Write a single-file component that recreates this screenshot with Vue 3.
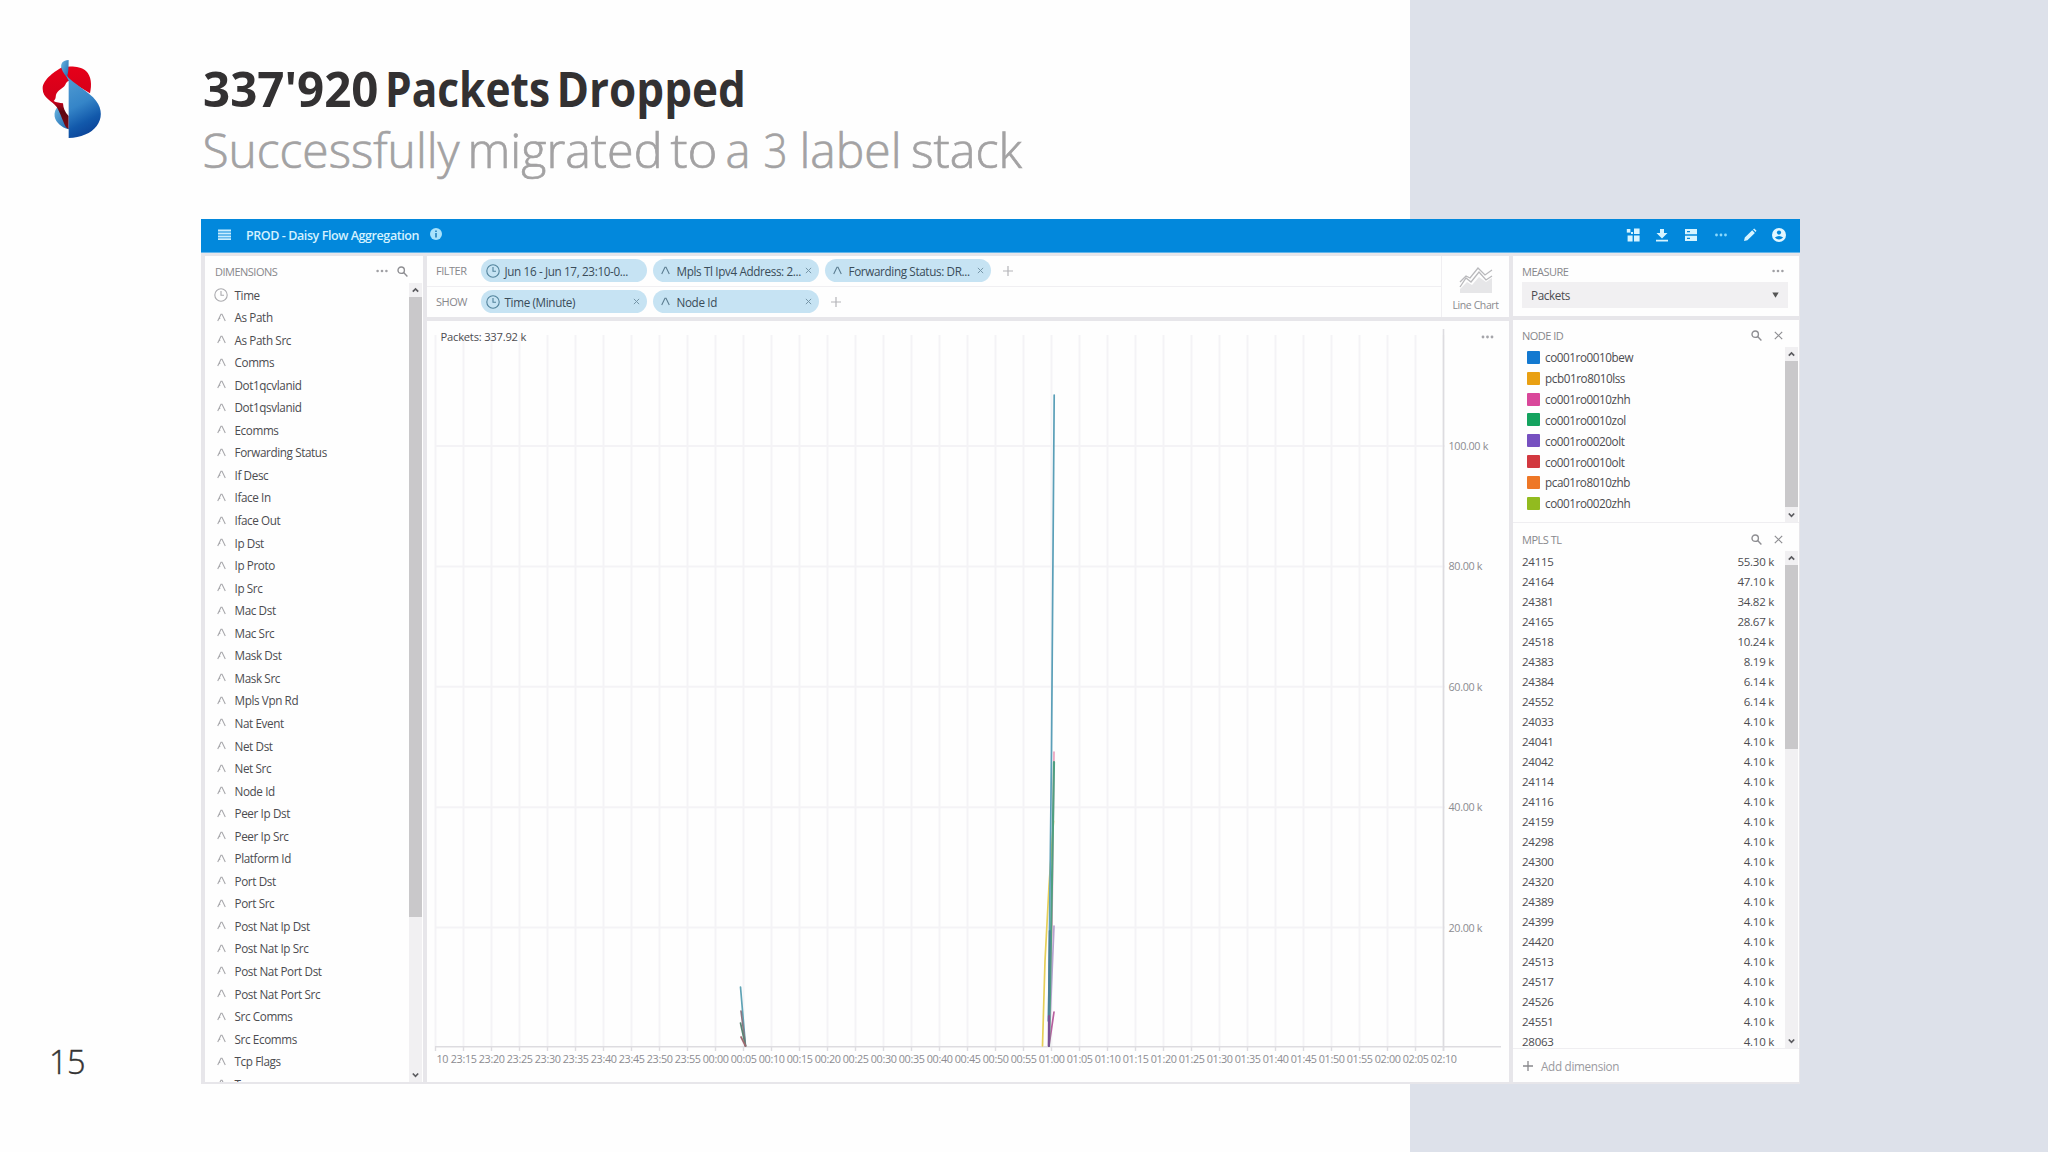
<script setup>
const titleWords = [
  { text: "337'920", x: 0, w: 175.5 },
  { text: 'Packets', x: 182, w: 165 },
  { text: 'Dropped', x: 353.5, w: 189.5 }
]
const subtitleWords = [
  { text: 'Successfully', x: -0.5, w: 257 },
  { text: 'migrated', x: 264.5, w: 195 },
  { text: 'to', x: 467.5, w: 47 },
  { text: 'a', x: 522.5, w: 25 },
  { text: '3', x: 560.5, w: 24 },
  { text: 'label', x: 596.5, w: 102 },
  { text: 'stack', x: 708, w: 111 }
]

const dimensions = [
  'Time', 'As Path', 'As Path Src', 'Comms', 'Dot1qcvlanid', 'Dot1qsvlanid', 'Ecomms',
  'Forwarding Status', 'If Desc', 'Iface In', 'Iface Out', 'Ip Dst', 'Ip Proto', 'Ip Src',
  'Mac Dst', 'Mac Src', 'Mask Dst', 'Mask Src', 'Mpls Vpn Rd', 'Nat Event', 'Net Dst',
  'Net Src', 'Node Id', 'Peer Ip Dst', 'Peer Ip Src', 'Platform Id', 'Port Dst', 'Port Src',
  'Post Nat Ip Dst', 'Post Nat Ip Src', 'Post Nat Port Dst', 'Post Nat Port Src',
  'Src Comms', 'Src Ecomms', 'Tcp Flags', 'Tos'
]

const filters = [
  { icon: 'time', label: 'Jun 16 - Jun 17, 23:10-0...', closable: false },
  { icon: 'text', label: 'Mpls Tl Ipv4 Address: 2...', closable: true },
  { icon: 'text', label: 'Forwarding Status: DR...', closable: true }
]
const splits = [
  { icon: 'time', label: 'Time (Minute)', closable: true },
  { icon: 'text', label: 'Node Id', closable: true }
]
const shelves = [
  { name: 'FILTER', items: filters },
  { name: 'SHOW', items: splits }
]

const nodes = [
  ['co001ro0010bew', '#1379d0'],
  ['pcb01ro8010lss', '#e9a013'],
  ['co001ro0010zhh', '#d9479a'],
  ['co001ro0010zol', '#14a35f'],
  ['co001ro0020olt', '#7650c0'],
  ['co001ro0010olt', '#d2383f'],
  ['pca01ro8010zhb', '#ee7726'],
  ['co001ro0020zhh', '#92bb1f']
]

const labels = [
  ['24115', '55.30 k'], ['24164', '47.10 k'], ['24381', '34.82 k'], ['24165', '28.67 k'],
  ['24518', '10.24 k'], ['24383', '8.19 k'], ['24384', '6.14 k'], ['24552', '6.14 k'],
  ...['24033', '24041', '24042', '24114', '24116', '24159', '24298', '24300', '24320',
    '24389', '24399', '24420', '24513', '24517', '24526', '24551', '28063'].map(n => [n, '4.10 k'])
]

const pad = n => String(n).padStart(2, '0')
const ticks = Array.from({ length: 37 }, (_, i) => {
  const minutes = (23 * 60 + 10 + i * 5) % 1440
  return { x: 8.5 + i * 28, label: i ? `${pad(Math.floor(minutes / 60))}:${pad(minutes % 60)}` : '10' }
})
const levels = [100, 80, 60, 40, 20].map((v, i) => ({ y: 125 + i * 120.4, label: `${v}.00 k` }))
</script>

<template>
  <main class="slide">
    <header class="heading">
      <svg class="logo" viewBox="0 0 270 300">
        <defs>
          <linearGradient id="sail" x1="0.3" y1="0" x2="0.6" y2="1">
            <stop offset="0" stop-color="#4f9ad2" />
            <stop offset="0.45" stop-color="#3585c8" />
            <stop offset="0.75" stop-color="#1259ab" />
            <stop offset="1" stop-color="#0a4196" />
          </linearGradient>
          <linearGradient id="tip" x1="0" y1="0" x2="1" y2="1">
            <stop offset="0" stop-color="#69b5e0" />
            <stop offset="1" stop-color="#1c66ae" />
          </linearGradient>
          <linearGradient id="ribbon" x1="0" y1="0" x2="0" y2="1">
            <stop offset="0" stop-color="#e60019" />
            <stop offset="0.55" stop-color="#d2001a" />
            <stop offset="0.72" stop-color="#5c0710" />
            <stop offset="1" stop-color="#7d0a14" />
          </linearGradient>
        </defs>
        <path fill="url(#tip)" d="M86 168C76 176 72 188 74 200C78 218 94 232 116 238L108 206L92 172Z" />
        <path fill="url(#ribbon)" d="M96 52C78 62 38 88 38 116C38 144 66 152 80 171C90 186 98 214 108 232L116 238V198C104 186 100 174 99 160C90 158 78 158 71 153C80 146 75 138 80 130C88 116 102 116 108 100C110 96 113 94 116 93L130 100L180 130C186 104 184 78 168 63C150 48 120 48 96 52Z" />
        <path fill="url(#tip)" d="M116 30C98 31 92 40 94 54C98 68 108 78 116 90L112 76Q116 66 116 30Z" />
        <path fill="url(#sail)" d="M108 76C132 102 178 126 198 152C218 178 216 206 200 228C184 250 152 263 116 264V92Z" />
      </svg>
      <svg class="titles" viewBox="0 0 900 140">
        <text v-for="w in titleWords" :key="w.text" class="title" :x="w.x" y="57" :textLength="w.w" lengthAdjust="spacingAndGlyphs">{{ w.text }}</text>
        <text v-for="w in subtitleWords" :key="w.text" class="subtitle" :x="w.x" y="118" :textLength="w.w" lengthAdjust="spacingAndGlyphs">{{ w.text }}</text>
      </svg>
    </header>

    <section class="app">
      <nav class="topbar">
        <svg class="burger" viewBox="0 0 13 11"><path d="M0 1.5h13M0 4.5h13M0 7.5h13M0 10.2h13" stroke="#c9edff" stroke-width="1.9" /></svg>
        <span class="cube">PROD - Daisy Flow Aggregation</span>
        <svg class="info" viewBox="0 0 12 12"><circle cx="6" cy="6" r="6" fill="#a9e2fb" /><path d="M6 2.5v1.6M6 5v4.4" stroke="#2a86c0" stroke-width="1.7" /></svg>
        <div class="tools">
          <svg viewBox="0 0 14 14" fill="#d6f4ff"><rect x=".8" y="1" width="3.6" height="3.6" /><path d="M8 .5h5.6v5.6H8zM1.6 7.6h5v5.8h-5zM8 7.6h5.6v5.8H8zM5 4h2v2H5z" /></svg>
          <svg viewBox="0 0 14 14" fill="#d6f4ff"><path d="M5 1h4v4h3.5L7 10.4 1.5 5H5zM1 11.8h12v1.8H1z" /></svg>
          <svg viewBox="0 0 14 14" fill="#d6f4ff"><path d="M1 1h12v5.2H1zM1 7.8h12V13H1z" /><path d="M3 3.6h3M3 10.4h3" stroke="#0288dc" stroke-width="1.2" /></svg>
          <svg viewBox="0 0 14 14" fill="#8bd8fb"><circle cx="2.5" cy="7" r="1.4" /><circle cx="7" cy="7" r="1.4" /><circle cx="11.5" cy="7" r="1.4" /></svg>
          <svg viewBox="0 0 14 14" fill="#d6f4ff"><path d="M1 13l.8-3.4 7.4-7.4 2.7 2.7-7.5 7.4zM10 1.4 11.2.5 13.5 2.8 12.6 4z" /></svg>
          <svg viewBox="0 0 14 14"><circle cx="7" cy="7" r="7" fill="#e2f7ff" /><circle cx="7" cy="4.6" r="2.1" fill="#0288dc" /><path d="M2.8 9.6Q7 6.6 11.2 9.6 7 13.4 2.8 9.6" fill="#0288dc" /></svg>
        </div>
      </nav>

      <div class="body">
        <aside class="panel dims">
          <div class="panel-head">
            <span class="caption">DIMENSIONS</span>
            <svg class="dots" viewBox="0 0 12 4"><circle cx="1.6" cy="2" r="1.3" /><circle cx="6" cy="2" r="1.3" /><circle cx="10.4" cy="2" r="1.3" /></svg>
            <svg class="search" viewBox="0 0 11 11"><circle cx="4.2" cy="4.2" r="3.2" /><path d="M6.6 6.6 10.4 10.4" /></svg>
          </div>
          <div class="dims-body">
            <ul class="dim-list">
              <li v-for="(d, i) in dimensions" :key="d">
                <svg v-if="i === 0" class="clock" viewBox="0 0 14 14"><circle cx="7" cy="7" r="6.2" /><path d="M7 3V7.2H10" /></svg>
                <svg v-else class="glyph" viewBox="0 0 10 9"><path d="M.8 8.4 4.4.8H5.6L9.2 8.4M2.4 6 3.6 5" /></svg>
                <span>{{ d }}</span>
              </li>
            </ul>
            <div class="scrollbar">
              <svg viewBox="0 0 13 13"><path d="M3.8 8.2 6.5 5.4 9.2 8.2" /></svg>
              <div class="thumb dims-thumb"></div>
              <svg class="down" viewBox="0 0 13 13"><path d="M3.8 5 6.5 7.8 9.2 5" /></svg>
            </div>
          </div>
        </aside>

        <div class="center">
          <div class="panel controls">
            <div class="shelves">
              <div v-for="s in shelves" :key="s.name" class="shelf">
                <span class="caption shelf-name">{{ s.name }}</span>
                <div v-for="p in s.items" :key="p.label" class="pill">
                  <svg v-if="p.icon === 'time'" class="clock" viewBox="0 0 14 14"><circle cx="7" cy="7" r="6.2" /><path d="M7 3V7.2H10" /></svg>
                  <svg v-else class="glyph" viewBox="0 0 10 9"><path d="M.8 8.4 4.4.8H5.6L9.2 8.4" /></svg>
                  <span class="pill-label">{{ p.label }}</span>
                  <svg v-if="p.closable" class="close" viewBox="0 0 8 8"><path d="M1 1 7 7M7 1 1 7" /></svg>
                </div>
                <svg class="plus" viewBox="0 0 10 10"><path d="M5 0V10M0 5H10" /></svg>
              </div>
            </div>
            <div class="vis">
              <svg viewBox="0 0 34 26">
                <path d="M1 22 8 15 13 18 20 10 27 15 33 11V26H1Z" fill="#e6e6e8" />
                <path d="M1 20 7 11 12 15 20 5 27 13 33 9" fill="none" stroke="#b9b9bc" stroke-width="1.3" />
                <path d="M1 15 7 9 11 11 19 1 26 8 33 3" fill="none" stroke="#b9b9bc" stroke-width="1.3" />
              </svg>
              <span>Line Chart</span>
            </div>
          </div>

          <div class="panel chart">
            <svg viewBox="0 0 1081 760">
              <g stroke="#f4f3f6" stroke-width="2">
                <line v-for="t in ticks" :key="t.x" :x1="t.x" :x2="t.x" y1="14" y2="725" />
                <line v-for="l in levels" :key="l.label" x1="9" x2="1018" :y1="l.y" :y2="l.y" />
              </g>
              <g stroke="#dddce0" stroke-width="1.4">
                <line v-for="t in ticks" :key="t.label" :x1="t.x" :x2="t.x" y1="725" y2="730" />
              </g>
              <path d="M1016.5 8V730M8 725.7H1074" stroke="#dddce0" stroke-width="1.6" fill="none" />
              <text class="total" x="13.5" y="20">Packets: 337.92 k</text>
              <g fill="#a5a5aa"><circle cx="1056" cy="16" r="1.4" /><circle cx="1060.5" cy="16" r="1.4" /><circle cx="1065" cy="16" r="1.4" /></g>
              <text v-for="l in levels" :key="l.y" class="axis" x="1021.5" :y="l.y + 4">{{ l.label }}</text>
              <text v-for="(t, i) in ticks" :key="t.label" class="axis" :text-anchor="i ? 'middle' : 'start'" :x="i ? t.x + 0.2 : t.x + 1" y="741.5">{{ t.label }}</text>
              <g fill="none" stroke-width="1.7" stroke-linecap="round">
                <path stroke="#d9487f" stroke-opacity=".5" d="M627 431 625 600 622 725" />
                <path stroke="#e6cf58" d="M626.5 500 622 565 618 640 615.5 725" />
                <path stroke="#b6a3cf" d="M627 605 622 725" />
                <path stroke="#b75f9e" d="M627 691 622 725" />
                <path stroke="#4f9f80" stroke-width="2.2" d="M627 441 625 560 622 725" />
                <path stroke="#5a9fb8" d="M627.2 74 625.5 300 624.5 430 621.5 700" />
                <path stroke="#4a7f93" stroke-width="2" d="M622.7 610 621.7 700" />
                <path stroke="#7a4f93" stroke-width="2.2" d="M622 695 621.8 725" />
                <path stroke="#5fa3b5" d="M313.5 666 318.5 725" />
                <path stroke="#8a7682" d="M314 690 318.5 725" />
                <path stroke="#5a8474" d="M313.5 702 318.5 725" />
                <path stroke="#a06a70" d="M314 716 318.5 725" />
              </g>
            </svg>
          </div>
        </div>

        <div class="side">
          <div class="panel measure">
            <div class="panel-head">
              <span class="caption">MEASURE</span>
              <svg class="dots" viewBox="0 0 12 4"><circle cx="1.6" cy="2" r="1.3" /><circle cx="6" cy="2" r="1.3" /><circle cx="10.4" cy="2" r="1.3" /></svg>
            </div>
            <div class="select"><span>Packets</span><svg viewBox="0 0 7 6"><path d="M.3.5H6.7L3.5 5.7Z" fill="#555" /></svg></div>
          </div>

          <div class="panel tiles">
            <section class="tile nodes">
              <div class="panel-head">
                <span class="caption">NODE ID</span>
                <svg class="search" viewBox="0 0 11 11"><circle cx="4.2" cy="4.2" r="3.2" /><path d="M6.6 6.6 10.4 10.4" /></svg>
                <svg class="cross" viewBox="0 0 9 9"><path d="M.8.8 8.2 8.2M8.2.8.8 8.2" /></svg>
              </div>
              <div class="tile-body">
                <ul class="node-list">
                  <li v-for="n in nodes" :key="n[0]"><i :style="{ background: n[1] }"></i><span>{{ n[0] }}</span></li>
                </ul>
                <div class="scrollbar">
                  <svg viewBox="0 0 13 13"><path d="M3.8 8.2 6.5 5.4 9.2 8.2" /></svg>
                  <div class="thumb nodes-thumb"></div>
                  <svg class="down" viewBox="0 0 13 13"><path d="M3.8 5 6.5 7.8 9.2 5" /></svg>
                </div>
              </div>
            </section>
            <section class="tile mpls">
              <div class="panel-head">
                <span class="caption">MPLS TL</span>
                <svg class="search" viewBox="0 0 11 11"><circle cx="4.2" cy="4.2" r="3.2" /><path d="M6.6 6.6 10.4 10.4" /></svg>
                <svg class="cross" viewBox="0 0 9 9"><path d="M.8.8 8.2 8.2M8.2.8.8 8.2" /></svg>
              </div>
              <div class="tile-body">
                <ul class="label-list">
                  <li v-for="l in labels" :key="l[0]"><span>{{ l[0] }}</span><span>{{ l[1] }}</span></li>
                </ul>
                <div class="scrollbar">
                  <svg viewBox="0 0 13 13"><path d="M3.8 8.2 6.5 5.4 9.2 8.2" /></svg>
                  <div class="thumb mpls-thumb"></div>
                  <svg class="down" viewBox="0 0 13 13"><path d="M3.8 5 6.5 7.8 9.2 5" /></svg>
                </div>
              </div>
            </section>
            <footer class="add">
              <svg viewBox="0 0 10 10"><path d="M5 0V10M0 5H10" /></svg>
              <span>Add dimension</span>
            </footer>
          </div>
        </div>
      </div>
    </section>

    <div class="page-number">15</div>
  </main>
</template>

<style>
body { margin: 0; }
</style>

<style scoped>
* { box-sizing: border-box; }
ul { list-style: none; margin: 0; padding: 0; }
svg { display: block; flex: none; }
.slide {
  position: relative;
  width: 2048px;
  height: 1152px;
  overflow: hidden;
  background: linear-gradient(90deg, #fefefe 1410px, #dde1ea 1410px);
  font-family: "Open Sans", "Noto Sans", sans-serif;
  color: #4c4c50;
}
.heading { display: flex; height: 219px; padding: 50px 0 0 30px; }
.logo { width: 90px; height: 100px; }
.titles { width: 900px; height: 140px; margin-left: 83px; overflow: visible; }
.title { font-size: 49px; font-weight: 700; fill: #333132; }
.subtitle { font-size: 48px; font-weight: 300; fill: #a3a2a3; stroke: #a3a2a3; stroke-width: 0.7px; }

.app {
  display: flex;
  flex-direction: column;
  width: 1599px;
  height: 865px;
  margin-left: 201px;
  background: #e7e6ea;
}
.topbar {
  display: flex;
  align-items: center;
  height: 34px;
  padding: 0 14px 0 17px;
  background: #0288dc;
  border-bottom: 1px solid #62b5ea;
}
.burger { width: 13px; height: 11px; margin-top: -3px; }
.cube { margin-left: 15px; font-size: 12.5px; font-weight: 600; letter-spacing: -0.42px; color: #d3f1ff; white-space: nowrap; width: 173px; }
.info { width: 12px; height: 12px; margin: -3px 0 0 11px; }
.tools { display: flex; gap: 15.2px; margin: -2px 0 0 auto; }
.tools svg { width: 14px; height: 14px; }

.body { display: flex; flex: 1; gap: 4px; padding: 3px 1px 2px 4px; min-height: 0; }
.panel { background: #fefefe; }
.panel-head { display: flex; align-items: center; }
.caption { font-size: 11px; letter-spacing: -0.5px; color: #88888c; }
.dots { width: 12px; height: 4px; fill: #a0a0a4; }
.search { width: 11px; height: 11px; fill: none; stroke: #8e8e92; stroke-width: 1.4; }
.cross { width: 9px; height: 9px; stroke: #8e8e92; stroke-width: 1.2; }
.clock { width: 14px; height: 14px; fill: none; stroke: #aaaaae; stroke-width: 1.1; }
.glyph { width: 9px; height: 9px; fill: none; stroke: #a8a8ac; stroke-width: 1.2; }

.scrollbar { display: flex; flex-direction: column; width: 13px; background: #f1f0f2; }
.scrollbar svg { width: 13px; height: 14px; fill: none; stroke: #5c5c60; stroke-width: 1.7; }
.scrollbar .down { margin-top: auto; }
.thumb { width: 13px; background: #c9c8ca; }
.dims-thumb { height: 620px; }
.nodes-thumb { height: 146px; }
.mpls-thumb { height: 184px; }

.dims { display: flex; flex-direction: column; width: 218px; }
.dims .panel-head { height: 27px; padding: 3px 15px 0 10px; }
.dims .dots { margin-left: auto; }
.dims .search { margin-left: 9px; }
.dims-body { display: flex; flex: 1; min-height: 0; overflow: hidden; padding-right: 1px; }
.dim-list { flex: 1; padding: 0.3px 0 0 9px; }
.dim-list li { display: flex; align-items: center; height: 22.55px; font-size: 11.7px; letter-spacing: -0.38px; white-space: nowrap; }
.dim-list span { margin-left: 6.5px; }
.dim-list .glyph { margin: 0 2px 0 3px; }

.center { display: flex; flex-direction: column; gap: 4px; width: 1082px; }
.controls { display: flex; height: 61px; }
.shelves { flex: 1; }
.shelf { display: flex; align-items: center; height: 30.5px; padding-left: 9px; border-bottom: 1px solid #f0eff2; }
.shelf:last-child { border: 0; }
.shelf-name { width: 45px; }
.pill {
  display: flex;
  align-items: center;
  width: 166px;
  height: 23px;
  margin-right: 6px;
  padding: 0 7px 0 5px;
  border-radius: 12px;
  background: #c6e3f3;
}
.pill .clock { stroke: #51829b; margin-right: 4.5px; }
.pill .glyph { margin: 0 6.5px 0 3px; stroke: #5b7c90; }
.pill-label { flex: 1; font-size: 11.7px; letter-spacing: -0.36px; color: #3a4c59; white-space: nowrap; }
.close { width: 7px; height: 7px; stroke: #7494a6; stroke-width: 1.1; }
.plus { width: 10px; height: 10px; margin-left: 6px; stroke: #b4b4b8; stroke-width: 1.2; }
.vis { display: flex; flex-direction: column; align-items: center; width: 68px; padding-top: 11px; border-left: 1px solid #f0eff2; font-size: 10.5px; letter-spacing: -0.4px; color: #8a8a8e; }
.vis svg { width: 34px; height: 26px; }
.vis span { line-height: 14px; margin-top: 5px; white-space: nowrap; }
.chart { flex: 1; }
.chart svg { width: 1081px; height: 760px; }
.total { font-size: 11.2px; letter-spacing: -0.22px; fill: #4c4c50; }
.axis { font-size: 10.8px; letter-spacing: -0.34px; fill: #8c8c91; }

.side { display: flex; flex-direction: column; gap: 4px; width: 286px; }
.measure { height: 61px; padding: 0 11px 0 9px; }
.measure .panel-head { height: 26px; padding: 4px 4px 0 0; }
.measure .dots, .tile .search { margin-left: auto; }
.select { display: flex; align-items: center; justify-content: space-between; height: 26px; padding: 0 9px 0 9px; background: #f1f0f2; font-size: 11.7px; letter-spacing: -0.36px; }
.select svg { width: 7px; height: 6px; }
.tiles { display: flex; flex-direction: column; flex: 1; }
.tile { display: flex; flex-direction: column; border-bottom: 1px solid #efeef1; }
.nodes { height: 203px; }
.mpls { height: 526px; }
.tile .panel-head { height: 27px; padding: 4px 16px 0 9px; }
.mpls .panel-head { height: 28px; }
.tile .cross { margin-left: 12px; }
.tile-body { display: flex; flex: 1; justify-content: space-between; padding-right: 1px; min-height: 0; }
.node-list { padding: 0 0 0 14px; }
.node-list li { display: flex; align-items: center; height: 20.85px; font-size: 11.7px; letter-spacing: -0.42px; }
.node-list i { width: 13px; height: 13px; margin-right: 5px; border-radius: 1px; }
.label-list { flex: 1; padding: 0 11px 0 9px; }
.label-list li { display: flex; align-items: center; justify-content: space-between; height: 20.04px; font-size: 11.5px; letter-spacing: -0.25px; }
.add { display: flex; align-items: center; height: 33px; padding-left: 10px; font-size: 11.7px; letter-spacing: -0.3px; color: #9a9a9e; }
.add svg { width: 10px; height: 10px; margin-right: 8px; stroke: #88888c; stroke-width: 1.3; }

.page-number { width: 90px; margin-top: -44px; padding-left: 49px; font-size: 32.5px; font-weight: 300; line-height: 44px; letter-spacing: -0.5px; color: #333; -webkit-text-stroke: 0.4px #333; }
</style>
